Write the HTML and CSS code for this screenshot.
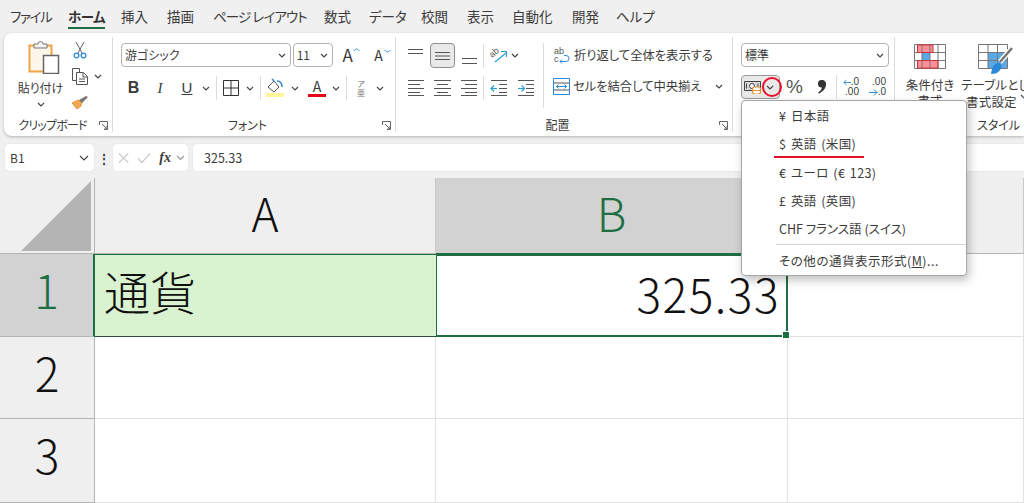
FILE: index.html
```html
<!DOCTYPE html>
<html lang="ja">
<head>
  <meta charset="UTF-8" />
  <title>通貨表示形式</title>
  <link rel="stylesheet" href="styles.css">
</head>
<body>
  <nav class="tabs">
    <span class="tab tab-file">ファイル</span>
    <span class="tab tab-active">ホーム</span>
    <span class="tab">挿入</span>
    <span class="tab">描画</span>
    <span class="tab tab-page">ページ レイアウト</span>
    <span class="tab">数式</span>
    <span class="tab">データ</span>
    <span class="tab">校閲</span>
    <span class="tab">表示</span>
    <span class="tab">自動化</span>
    <span class="tab">開発</span>
    <span class="tab">ヘルプ</span>
  </nav>

  <section class="ribbon">
    <!-- clipboard -->
    <div class="group group-clip">
      <div class="group-body clip-body">
        <div class="paste">
          <svg class="paste-icon" width="32" height="34" viewBox="0 0 32 34">
            <rect x="1.500" y="5.500" width="22" height="26" fill="#fdf6ea" stroke="#f0a443" stroke-width="2"/>
            <path d="M6 8V4h4a2.500 2.500 0 0 1 5 0h4v4z" fill="#f4f4f4" stroke="#777"/>
            <rect x="15.500" y="15.500" width="15" height="18" fill="#fff" stroke="#666" stroke-width="1.500"/>
          </svg>
          <span class="paste-label">貼り付け</span>
          <svg class="chev" width="8" height="5" viewBox="0 0 8 5"><path d="M1 1l3 3 3-3"/></svg>
        </div>
        <div class="clip-tools">
          <svg class="tool-cut" width="14" height="17" viewBox="0 0 14 17" fill="none">
            <path d="M3 0l6 11M11 0L5 11" stroke="#666"/>
            <circle cx="3.500" cy="13.500" r="2.300" stroke="#2b88d8" stroke-width="1.300"/>
            <circle cx="10.500" cy="13.500" r="2.300" stroke="#2b88d8" stroke-width="1.300"/>
          </svg>
          <div class="tool-copy">
            <svg width="18" height="17" viewBox="0 0 18 17" fill="#fff" stroke="#555">
              <path d="M1.500.5h7v12h-7z"/>
              <path d="M5.500 4.500h7l4 4v8h-11z"/>
              <path d="M12 5v4h4M8 11h6M8 13.500h6" fill="none"/>
            </svg>
            <svg class="chev" width="8" height="5" viewBox="0 0 8 5"><path d="M1 1l3 3 3-3"/></svg>
          </div>
          <svg class="tool-brush" width="18" height="14" viewBox="0 0 18 14">
            <path d="M1 7l5 6 4-3 1-4-4-2z" fill="#f3a94e" stroke="#d8892a" stroke-width=".8"/>
            <path d="M8 4l3 3 6-6-2-1z" fill="#777"/>
          </svg>
        </div>
      </div>
      <div class="group-foot"><span class="group-label label-clip">クリップボード</span><svg class="launcher" width="9" height="9" viewBox="0 0 9 9"><path d="M.5 4V.5h8v8H5M3 3l5 5M8 5v3H5"/></svg></div>
    </div>

    <!-- font -->
    <div class="group group-font">
      <div class="group-body font-body">
        <div class="font-top">
          <div class="combo combo-font"><span>游ゴシック</span><svg class="chev" width="8" height="5" viewBox="0 0 8 5"><path d="M1 1l3 3 3-3"/></svg></div>
          <div class="combo combo-size"><span>11</span><svg class="chev" width="8" height="5" viewBox="0 0 8 5"><path d="M1 1l3 3 3-3"/></svg></div>
          <span class="grow-btn">A<i class="caret caret-up"></i></span>
          <span class="grow-btn grow-small">A<i class="caret caret-down"></i></span>
        </div>
        <div class="font-tools">
          <span class="fmt fmt-bold">B</span>
          <span class="fmt fmt-italic">I</span>
          <span class="fmt fmt-under">U</span>
          <span class="cell"><svg class="chev" width="8" height="5" viewBox="0 0 8 5"><path d="M1 1l3 3 3-3"/></svg></span>
          <span class="cell"><i class="vsep"></i></span>
          <span class="cell"><svg width="16" height="16" viewBox="0 0 16 16" fill="none" stroke="#333"><path d="M.5.500h15v15H.5zM8 .5v15M.5 8h15"/></svg></span>
          <span class="cell"><svg class="chev" width="8" height="5" viewBox="0 0 8 5"><path d="M1 1l3 3 3-3"/></svg></span>
          <span class="cell"><i class="vsep"></i></span>
          <span class="cell"><svg width="18" height="20" viewBox="0 0 18 20">
            <path d="M2 9l6-6 5 6-5 5z" fill="#fff" stroke="#555"/>
            <path d="M6 1l2 2M11 3c3 0 5 2 5 6" fill="none" stroke="#2b88d8" stroke-width="1.500"/>
            <rect y="15" width="18" height="4" fill="#fff59d"/>
          </svg></span>
          <span class="cell"><svg class="chev" width="8" height="5" viewBox="0 0 8 5"><path d="M1 1l3 3 3-3"/></svg></span>
          <span class="cell"><span class="color-a">A</span></span>
          <span class="cell"><svg class="chev" width="8" height="5" viewBox="0 0 8 5"><path d="M1 1l3 3 3-3"/></svg></span>
          <span class="cell"><i class="vsep"></i></span>
          <span class="cell phonetic"><small>ア</small><small>亜</small></span>
          <span class="cell"><svg class="chev" width="8" height="5" viewBox="0 0 8 5"><path d="M1 1l3 3 3-3"/></svg></span>
        </div>
      </div>
      <div class="group-foot"><span class="group-label">フォント</span><svg class="launcher" width="9" height="9" viewBox="0 0 9 9"><path d="M.5 4V.5h8v8H5M3 3l5 5M8 5v3H5"/></svg></div>
    </div>

    <!-- alignment -->
    <div class="group group-align">
      <div class="group-body align-body">
        <div class="align-grid">
          <span class="cell"><svg width="17" height="16" viewBox="0 0 17 16" class="ln"><path d="M1 1.500h15M1 5.500h15"/></svg></span>
          <span class="cell cell-on"><svg width="17" height="16" viewBox="0 0 17 16" class="ln"><path d="M1 4.500h15M1 8h15M1 11.500h15"/></svg></span>
          <span class="cell"><svg width="17" height="16" viewBox="0 0 17 16" class="ln"><path d="M1 10.500h15M1 15.500h15"/></svg></span>
          <span class="cell"><i class="vsep"></i></span>
          <span class="cell orient">
            <svg width="18" height="17" viewBox="0 0 18 17" fill="none"><path d="M5 15L16 6M11 4.500h5.500V10" stroke="#2b9fd8" stroke-width="1.200"/><text class="ab" transform="rotate(-40 2 11)" x="2" y="11">ab</text></svg>
            <svg class="chev" width="8" height="5" viewBox="0 0 8 5"><path d="M1 1l3 3 3-3"/></svg>
          </span>
          <span class="cell"></span>
          <span class="cell"><svg width="17" height="16" viewBox="0 0 17 16" class="ln"><path d="M1 .5h16M1 4.500h12M1 8.500h16M1 12.500h12M1 15.500h16"/></svg></span>
          <span class="cell"><svg width="17" height="16" viewBox="0 0 17 16" class="ln"><path d="M0 .5h17M3 4.500h11M0 8.500h17M3 12.500h11M0 15.500h17"/></svg></span>
          <span class="cell"><svg width="17" height="16" viewBox="0 0 17 16" class="ln"><path d="M0 .5h16M4 4.500h12M0 8.500h16M4 12.500h12M0 15.500h16"/></svg></span>
          <span class="cell"><i class="vsep"></i></span>
          <span class="cell"><svg width="17" height="16" viewBox="0 0 17 16" fill="none"><path class="ln-s" d="M1 .5h16M9 4.500h8M9 8.500h8M9 12.500h8M1 15.500h16"/><path d="M7 8.500H1M4 5.500l-3 3 3 3" stroke="#2b9fd8" stroke-width="1.200"/></svg></span>
          <span class="cell"><svg width="17" height="16" viewBox="0 0 17 16" fill="none"><path class="ln-s" d="M0 .5h16M8 4.500h8M8 8.500h8M8 12.500h8M0 15.500h16"/><path d="M0 8.500h6M3.500 5.500l3 3-3 3" stroke="#2b9fd8" stroke-width="1.200"/></svg></span>
        </div>
        <i class="vsep vsep-tall"></i>
        <div class="wrap-col">
          <div class="wrap-row">
            <svg width="18" height="19" viewBox="0 0 18 19" fill="none"><text class="ab" x="1" y="8">ab</text><text class="ab" x="1" y="16">c</text><path d="M7 15.500h6a3 3 0 0 0 0-6h-2M9 13.500l-2 2 2 2" stroke="#2b88d8"/></svg>
            <span>折り返して全体を表示する</span>
          </div>
          <div class="wrap-row">
            <svg width="17" height="17" viewBox="0 0 17 17" fill="none"><path d="M.5 .5h16v16H.5z" stroke="#2b88d8"/><path class="ln-s" d="M1 5h15M1 12h15"/><path d="M3 8.500h11M5.500 6.500l-2 2 2 2M11.500 6.500l2 2-2 2" stroke="#2b88d8"/></svg>
            <span>セルを結合して中央揃え</span>
            <svg class="chev merge-chev" width="8" height="5" viewBox="0 0 8 5"><path d="M1 1l3 3 3-3"/></svg>
          </div>
        </div>
      </div>
      <div class="group-foot"><span class="group-label">配置</span><svg class="launcher" width="9" height="9" viewBox="0 0 9 9"><path d="M.5 4V.5h8v8H5M3 3l5 5M8 5v3H5"/></svg></div>
    </div>

    <!-- number -->
    <div class="group group-number">
      <div class="group-body number-body">
        <div class="combo combo-format"><span>標準</span><svg class="chev" width="8" height="5" viewBox="0 0 8 5"><path d="M1 1l3 3 3-3"/></svg></div>
        <div class="number-tools">
          <span class="cur-btn">
            <svg width="18" height="14" viewBox="0 0 18 14" fill="none">
              <path d="M.5 1.500h16v9H.5z" fill="#d8d8d8" stroke="#444"/><circle cx="8" cy="6" r="2.500" fill="#fff" stroke="#444"/><path d="M2.500 3.500v5M14 3.500v5" stroke="#444"/>
              <rect x="8.500" y="7" width="8" height="7" rx="2" fill="#fff" stroke="#e8912c" stroke-width="1.200"/><path d="M9 10.500h7" stroke="#e8912c"/>
            </svg>
            <svg class="chev" width="8" height="5" viewBox="0 0 8 5"><path d="M1 1l3 3 3-3"/></svg>
          </span>
          <span class="pct">%</span>
          <span class="comma"><svg width="9" height="14" viewBox="0 0 9 14"><path fill="#333" d="M4.500 0a4 4 0 0 1 4.500 4.500c0 4-3 7-7 9l-1-1c2-1 3.500-3 4-5a3.500 3.500 0 1 1-.5-7.500z"/></svg></span>
          <i class="vsep"></i>
          <span class="dec"><b class="dec-a"><svg width="8" height="7" viewBox="0 0 9 7" fill="none"><path d="M9 3.500H1M4 .5l-3 3 3 3" stroke="#2b88d8"/></svg>.0</b><b>.00</b></span>
          <span class="dec dec-r"><b>.00</b><b class="dec-a"><svg width="9" height="7" viewBox="0 0 9 7" fill="none"><path d="M0 3.500h8M5 .5l3 3-3 3" stroke="#2b88d8"/></svg>.0</b></span>
        </div>
      </div>
    </div>

    <!-- styles -->
    <div class="group group-styles">
      <div class="group-body styles-body">
        <div class="style-item">
          <svg width="32" height="25" viewBox="0 0 32 25">
            <rect x="3" y="1" width="16" height="7" fill="#ff8f98"/><rect x="8" y="9" width="8" height="7" fill="#5aa9e6"/><rect x="3" y="17" width="21" height="7" fill="#ff8f98"/>
            <path d="M.5.500h31v24H.5zM.5 8.500h31M.5 16.500h31M8 .5v24M16 .5v24M24 .5v24" fill="none" stroke="#777"/>
            <path d="M3.500 1h15.500v7.500H3.500zM3.500 16.500h20.500v7.500H3.500z" fill="none" stroke="#d13438"/>
          </svg>
          <span>条件付き</span>
          <span>書式</span>
        </div>
        <div class="style-item style-table">
          <svg class="table-icon" width="36" height="31" viewBox="0 0 36 31">
            <rect x="10" y="9" width="19" height="16" fill="#5aa9e6"/>
            <path d="M.5.500h29v24H.5zM.5 8.500h29M.5 16.500h29M10 .5v24M19.500.5v24" fill="none" stroke="#777"/>
            <path d="M34 4L22 18" stroke="#fff" stroke-width="5"/><path d="M34 4L22 18" stroke="#777" stroke-width="2.500"/><path d="M13 30c1-7 3-11 8-11 3 1 3 4 1 7-2 3-5 4-9 4z" fill="#2b88d8"/>
          </svg>
          <span class="nowrap">テーブルとして</span>
          <span class="nowrap table-sub">書式設定 <svg class="chev" width="8" height="5" viewBox="0 0 8 5"><path d="M1 1l3 3 3-3"/></svg></span>
        </div>
      </div>
      <div class="group-foot styles-foot"><span class="group-label">スタイル</span></div>
    </div>
  </section>

  <div class="formula-row">
    <div class="name-box"><span>B1</span><svg class="chev" width="10" height="6" viewBox="0 0 10 6"><path d="M1 1l4 4 4-4"/></svg></div>
    <span class="dots">⋮</span>
    <div class="fx-box">
      <svg width="12" height="12" viewBox="0 0 12 12" fill="none" stroke="#c4c4c4" stroke-width="1.200"><path d="M1 1l10 10M11 1L1 11"/></svg>
      <svg width="15" height="12" viewBox="0 0 15 12" fill="none" stroke="#c4c4c4" stroke-width="1.200"><path d="M1 6l4 5 9-10"/></svg>
      <span class="fx">fx</span>
      <svg class="chev chev-light" width="9" height="6" viewBox="0 0 9 6"><path d="M1 1l3.500 3.500L8 1"/></svg>
    </div>
    <div class="formula-input">325.33</div>
  </div>

  <div class="sheet">
    <div class="corner"><svg width="70" height="70" viewBox="0 0 70 70"><path d="M70 0v70H0z" fill="#b4b4b4"/></svg></div>
    <div class="col-head">A</div>
    <div class="col-head col-on">B</div>
    <div class="col-head col-rest"></div>

    <div class="row-head row-on">1</div>
    <div class="cell-a1">通貨</div>
    <div class="cell-b1">325.33</div>
    <div class="blank"></div>

    <div class="row-head">2</div>
    <div class="blank"></div>
    <div class="blank"></div>
    <div class="blank"></div>

    <div class="row-head">3</div>
    <div class="blank"></div>
    <div class="blank"></div>
    <div class="blank"></div>
  </div>

  <ul class="cur-menu">
    <li>¥ 日本語</li>
    <li>$ 英語 (米国)</li>
    <li>€ ユーロ (€ 123)</li>
    <li>£ 英語 (英国)</li>
    <li class="menu-chf">CHF フランス語 (スイス)</li>
    <li class="menu-sep"></li>
    <li class="menu-more">その他の通貨表示形式(<u>M</u>)...</li>
  </ul>
  <i class="mark-circle"></i>
  <i class="mark-line"></i>
</body>
</html>
```

FILE: styles.css
```css
:root {
  --text-color: #3b3b3b;
  --line-color: #e1e1e1;
  --head-color: #efefef;
  --head-on: #d2d2d2;
  --green: #1f6e43;
  --sep-color: #dcdcdc;
}

* {
  box-sizing: border-box;
}

html, body {
  height: 503px;
  overflow: hidden;
}

body {
  margin: 0;
  position: relative;
  background: #f0f0f0;
  color: var(--text-color);
  font-family: "Noto Sans CJK JP", "Noto Sans", sans-serif;
  font-size: 12px;
  font-feature-settings: "palt";
}

/* tabs */
.tabs {
  display: grid;
  grid-template-columns: 58px 53px 46px 46px 111px 45px 52px 46px 45px 60px 44px auto;
  justify-items: start;
  height: 33px;
  padding: 7px 0 0 10px;
  font-size: 13.500px;
  line-height: 19px;
}

.tab {
  white-space: nowrap;
}

.tab-file { letter-spacing: -1.300px; }
.tab-page { letter-spacing: -0.900px; }

.tab-active {
  height: 22px;
  letter-spacing: -0.500px;
  font-weight: 700;
  color: #333;
  border-bottom: 2px solid var(--green);
}

/* ribbon */
.ribbon {
  display: flex;
  height: 103px;
  margin-left: 4px;
  padding: 4px 0;
  background: #fff;
  border-radius: 8px 0 0 8px;
  box-shadow: 0 1px 3px rgba(0,0,0,0.25);
}

.group {
  display: flex;
  flex-direction: column;
  flex: none;
  border-right: 1px solid var(--sep-color);
}

.group-clip { width: 109px; }
.group-font { width: 283px; }
.group-align { width: 337px; }
.group-number { width: 162px; }
.group-styles { flex: 1; border-right: 0; min-width: 0; overflow: hidden; }

.group-body {
  flex: 1;
  padding-top: 6px;
}

.group-foot {
  display: flex;
  align-items: center;
  height: 18px;
  padding-right: 4px;
  margin-bottom: -2px;
}

.group-label {
  flex: 1;
  text-align: center;
  font-size: 12px;
  line-height: 18px;
}

.label-clip {
  letter-spacing: -0.800px;
  padding-left: 2px;
}

.launcher {
  fill: none;
  stroke: #666;
}

.chev {
  flex: none;
  fill: none;
  stroke: #444;
  stroke-width: 1.2;
}

.chev-light {
  stroke: #999;
}

.ln {
  fill: none;
  stroke: #555;
}

.ln-s {
  stroke: #555;
}

.cell {
  display: flex;
  align-items: center;
  justify-content: center;
}

.vsep {
  display: block;
  width: 1px;
  height: 24px;
  background: var(--sep-color);
}

/* clipboard */
.clip-body {
  display: flex;
  padding-left: 6px;
}

.paste {
  display: flex;
  flex-direction: column;
  align-items: center;
  width: 61px;
}

.paste-icon {
  margin: -3px 0 0 6px;
}

.paste-label {
  margin-top: 4px;
  line-height: 20px;
}

.paste .chev {
  margin-top: 4px;
}

.clip-tools {
  display: flex;
  flex-direction: column;
  width: 36px;
}

.tool-cut {
  margin: -1px 0 9px 2px;
}

.tool-copy {
  display: flex;
  align-items: center;
  gap: 5px;
  margin-bottom: 11px;
}

/* font */
.font-body {
  padding-left: 8px;
}

.font-top {
  display: flex;
  height: 25px;
  gap: 2px;
}

.combo {
  display: flex;
  align-items: center;
  justify-content: space-between;
  height: 24px;
  padding: 0 4px 0 3px;
  border: 1px solid #b3b3b3;
  border-radius: 4px;
  background: #fff;
  line-height: 20px;
}

.combo-font { width: 171px; }
.combo-size { width: 41px; }
.combo-format { width: 148px; }

.grow-btn {
  position: relative;
  width: 29px;
  padding-left: 7px;
  font-size: 17px;
  line-height: 24px;
}

.grow-small {
  font-size: 14px;
  padding-left: 8px;
}

.caret {
  position: absolute;
  top: 5px;
  left: 19px;
  width: 5px;
  height: 5px;
  border-left: 1px solid #2b88d8;
  border-top: 1px solid #2b88d8;
  transform: scale(0.9, 0.6) rotate(45deg);
}

.caret-down {
  transform: scale(0.9, 0.6) rotate(225deg);
}

.font-tools {
  display: grid;
  grid-template-columns: 25px 28px 26px 12px 8px 22px 16px 4px 26px 14px 30px 8px 12px 18px 20px;
  height: 24px;
  margin-top: 8px;
}

.fmt {
  text-align: center;
  font-size: 15px;
  line-height: 24px;
  font-family: "Liberation Sans", sans-serif;
}

.fmt-bold { font-weight: 700; font-size: 16px; }
.fmt-italic { font-style: italic; font-family: "Liberation Serif", serif; }
.fmt-under { text-decoration: underline; font-weight: 400; }

.color-a {
  display: block;
  width: 18px;
  text-align: center;
  font-size: 14px;
  line-height: 15px;
  border-bottom: 3px solid #e60012;
}

.phonetic {
  flex-direction: column;
  line-height: 9px;
  color: #777;
}

.phonetic small {
  font-size: 8px;
}

/* alignment */
.align-body {
  display: flex;
  padding-left: 6px;
}

.align-grid {
  display: grid;
  grid-template-columns: 27px 27px 27px 1px 28px 28px;
  grid-template-rows: 25px 24px;
  row-gap: 8px;
  width: 138px;
}

.cell-on {
  margin: 0 1px;
  background: #e9e9e9;
  border: 1px solid #8f8f8f;
  border-radius: 4px;
}

.orient {
  gap: 3px;
  justify-content: flex-start;
  padding-left: 6px;
  width: 44px;
}

.vsep-tall {
  height: 65px;
  margin-left: 3px;
}

.wrap-col {
  display: flex;
  flex-direction: column;
  gap: 11px;
  padding: 2px 0 0 9px;
}

.wrap-row {
  display: flex;
  align-items: center;
  gap: 3px;
  height: 20px;
  font-size: 12.300px;
  white-space: nowrap;
}

.ab {
  font-size: 9px;
  fill: #555;
  font-family: "Liberation Sans", sans-serif;
}

.merge-chev {
  margin-left: 10px;
}

/* number */
.number-body {
  padding-left: 8px;
}

.number-tools {
  display: flex;
  align-items: center;
  height: 24px;
  margin-top: 8px;
}

.cur-btn {
  display: flex;
  align-items: center;
  gap: 4px;
  flex: none;
  width: 39px;
  height: 24px;
  padding-left: 2px;
  background: #e9e9e9;
  border: 1px solid #9a9a9a;
  border-radius: 4px;
}

.pct {
  width: 37px;
  padding-left: 6px;
  color: #555;
  font-size: 19px;
  line-height: 24px;
  font-family: "Liberation Sans", sans-serif;
}

.comma {
  display: flex;
  width: 19px;
}

.number-tools .vsep {
  margin-right: 6px;
}

.dec {
  display: flex;
  flex-direction: column;
  align-items: flex-end;
  flex: none;
  width: 16px;
  font-family: "Liberation Sans", sans-serif;
  font-size: 10px;
  line-height: 10px;
}

.dec b {
  font-weight: 400;
}

.dec-r {
  width: 27px;
}

.dec-a {
  display: flex;
  align-items: center;
}

/* styles */
.styles-body {
  display: flex;
  padding-left: 4px;
}

.style-item {
  display: flex;
  flex-direction: column;
  align-items: center;
  flex: none;
  width: 62px;
  font-size: 12.500px;
  line-height: 16px;
}

.style-item svg:first-child {
  margin: 1px 0 8px;
}

.style-table {
  align-items: flex-start;
  width: 84px;
  letter-spacing: 0.200px;
}

.style-table svg.table-icon {
  margin: 1px 0 2px 17px;
}

.table-sub {
  margin-left: 5px;
}

.nowrap {
  white-space: nowrap;
}

.styles-foot {
  padding-left: 82px;
  justify-content: flex-start;
}

.styles-foot .group-label {
  flex: none;
}

/* formula bar */
.formula-row {
  display: flex;
  align-items: stretch;
  height: 27px;
  margin: 8px 0 0 5px;
}

.name-box, .fx-box, .formula-input {
  display: flex;
  align-items: center;
  background: #fff;
  border-radius: 4px;
  box-shadow: 0 0 1px rgba(0,0,0,0.2);
}

.name-box {
  justify-content: space-between;
  width: 89px;
  padding: 0 5px;
}

.dots {
  width: 19px;
  text-align: center;
  line-height: 27px;
  font-weight: 700;
}

.fx-box {
  gap: 8px;
  width: 75px;
  padding: 0 3px 0 5px;
}

.fx {
  margin-right: -3px;
  font-family: "Liberation Serif", serif;
  font-style: italic;
  font-weight: 700;
  font-size: 14px;
}

.formula-input {
  flex: 1;
  margin-left: 5px;
  padding-left: 11px;
  font-size: 12.500px;
  border-radius: 4px 0 0 4px;
}

/* sheet */
.sheet {
  display: grid;
  grid-template-columns: 95px 341px 352px 1fr;
  grid-template-rows: 76px 83px 82px 84px;
  margin-top: 7px;
  color: #111;
  background: #fff;
  font-size: 46px;
  font-weight: 300;
}

.corner {
  display: flex;
  align-items: flex-end;
  justify-content: flex-end;
  padding: 0 3px 2px 0;
  background: var(--head-color);
  border-right: 1px solid #b5b5b5;
  border-bottom: 1px solid #b5b5b5;
}

.col-head {
  text-align: center;
  line-height: 68px;
  background: var(--head-color);
  border-right: 1px solid #c8c8c8;
  border-bottom: 1px solid #b5b5b5;
}

.col-on {
  background: var(--head-on);
  color: var(--green);
  border-bottom-color: var(--green);
}

.row-head {
  text-align: center;
  line-height: 71px;
  background: var(--head-color);
  border-right: 1px solid #b5b5b5;
  border-bottom: 1px solid #b5b5b5;
}

.row-on {
  background: var(--head-on);
  color: var(--green);
  border-right: 2px solid var(--green);
}

.cell-a1 {
  padding-left: 9px;
  line-height: 71px;
  background: #d9f2d0;
  border-top: 1px solid var(--green);
  border-bottom: 1px solid #2d4a38;
}

.cell-b1 {
  position: relative;
  padding-right: 6px;
  text-align: right;
  letter-spacing: 1.500px;
  line-height: 74px;
  border: 2px solid var(--green);
  border-left-width: 1px;
}

.cell-b1::after {
  content: "";
  position: absolute;
  right: -4px;
  bottom: -4px;
  width: 6px;
  height: 6px;
  background: var(--green);
  border: 1px solid #fff;
}

.blank {
  border-right: 1px solid var(--line-color);
  border-bottom: 1px solid var(--line-color);
}

/* currency dropdown */
.cur-menu {
  position: absolute;
  left: 741px;
  top: 100px;
  width: 226px;
  height: 176px;
  margin: 0;
  padding: 1px 0 0;
  list-style: none;
  background: #fff;
  border: 1px solid #a6a6a6;
  border-radius: 4px;
  box-shadow: 2px 4px 10px rgba(0,0,0,0.25);
}

.cur-menu li {
  height: 28.300px;
  padding-left: 37px;
  font-size: 12.500px;
  letter-spacing: 0.350px;
  word-spacing: 1.500px;
  line-height: 27px;
  white-space: nowrap;
}

.cur-menu .menu-chf {
  letter-spacing: 0;
  word-spacing: 0;
}

.cur-menu .menu-more {
  letter-spacing: 0.500px;
}

.cur-menu .menu-sep {
  height: 1px;
  margin: 1px 0 2px 34px;
  padding: 0;
  background: #d4d4d4;
}

.mark-circle {
  position: absolute;
  left: 762px;
  top: 77px;
  width: 20px;
  height: 20px;
  border: 2px solid #e8102a;
  border-radius: 50%;
}

.mark-line {
  position: absolute;
  left: 774px;
  top: 156px;
  width: 90px;
  height: 2px;
  background: #e8102a;
}
```
